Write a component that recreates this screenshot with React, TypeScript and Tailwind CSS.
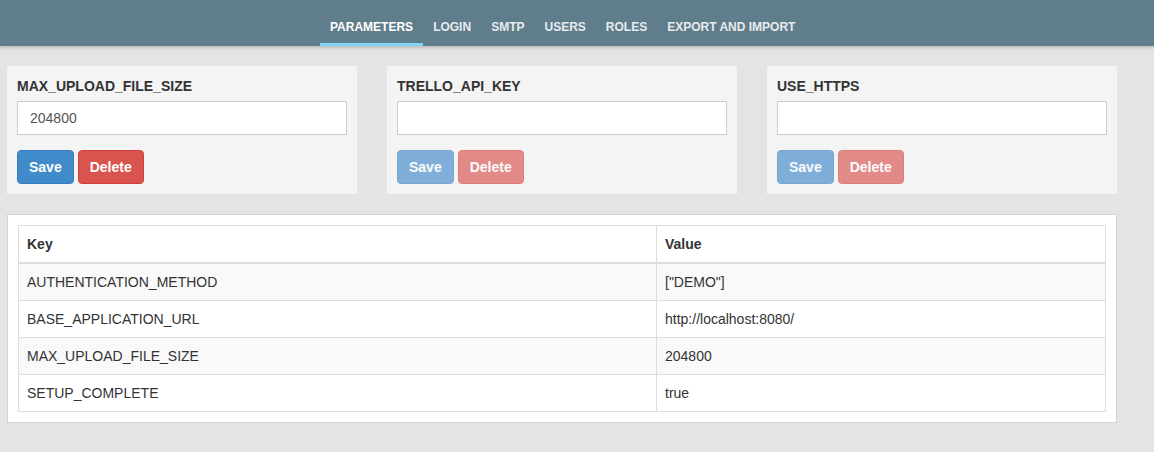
/* 관리 설정 화면 — 파라미터 탭 */

const tabs = ['PARAMETERS', 'LOGIN', 'SMTP', 'USERS', 'ROLES', 'EXPORT AND IMPORT']

const params = [
  { name: 'MAX_UPLOAD_FILE_SIZE', value: '204800', enabled: true },
  { name: 'TRELLO_API_KEY', value: '', enabled: false },
  { name: 'USE_HTTPS', value: '', enabled: false },
]

const rows = [
  { key: 'AUTHENTICATION_METHOD', value: '["DEMO"]' },
  { key: 'BASE_APPLICATION_URL', value: 'http://localhost:8080/' },
  { key: 'MAX_UPLOAD_FILE_SIZE', value: '204800' },
  { key: 'SETUP_COMPLETE', value: 'true' },
]

function ParamCard({ name, value, enabled }: { name: string; value: string; enabled: boolean }) {
  return (
    <div className="w-[350px] bg-[#f4f4f4] p-[10px]">
      <div className="text-[14px] font-bold leading-[20px] text-[#333]">{name}</div>
      <input
        readOnly
        value={value}
        className="mt-[5px] block h-[34px] w-full border border-[#ccc] bg-white px-[12px] text-[14px] text-[#555] outline-none"
      />
      <div className={`mt-[15px] flex gap-[4px] ${enabled ? '' : 'opacity-65'}`}>
        <button className="h-[34px] rounded-[4px] border border-[#357ebd] bg-[#428bca] px-[11px] text-[14px] font-bold text-white">
          Save
        </button>
        <button className="h-[34px] rounded-[4px] border border-[#d43f3a] bg-[#d9534f] px-[11px] text-[14px] font-bold text-white">
          Delete
        </button>
      </div>
    </div>
  )
}

export default function App() {
  return (
    <div className="min-h-[452px] bg-[#e4e4e4] font-['Liberation_Sans',Arial,sans-serif]">
      {/* 상단 탭 */}
      <header className="relative h-[46px] bg-[#607d8b] shadow-[0_2px_3px_rgba(0,0,0,0.18)]">
        <nav className="flex h-full pl-[320px]">
          {tabs.map((t, i) => (
            <div
              key={t}
              className={`border-b-[3px] px-[10px] pt-[20px] pb-[9px] text-[12px] font-bold leading-[14px] ${
                i === 0 ? 'border-[#81d4fa] text-white' : 'border-transparent text-[#e6ecef]'
              }`}
            >
              {t}
            </div>
          ))}
        </nav>
      </header>

      <main className="w-[1117px] pt-[20px] pl-[7px]">
        {/* 파라미터 카드 */}
        <div className="flex gap-[30px]">
          {params.map((p) => (
            <ParamCard key={p.name} {...p} />
          ))}
        </div>

        {/* 파라미터 테이블 */}
        <div className="mt-[20px] border border-[#d4d4d4] bg-white p-[10px]">
          <table className="w-full table-fixed border-collapse text-[14px] leading-[20px] text-[#333]">
            <thead>
              <tr>
                <th className="w-[638px] border border-b-2 border-[#ddd] p-[8px] text-left font-bold">Key</th>
                <th className="border border-b-2 border-[#ddd] p-[8px] text-left font-bold">Value</th>
              </tr>
            </thead>
            <tbody>
              {rows.map((r, i) => (
                <tr key={r.key} className={i % 2 === 0 ? 'bg-[#f9f9f9]' : 'bg-white'}>
                  <td className="border border-[#ddd] p-[8px]">{r.key}</td>
                  <td className="border border-[#ddd] p-[8px]">{r.value}</td>
                </tr>
              ))}
            </tbody>
          </table>
        </div>
      </main>
    </div>
  )
}
